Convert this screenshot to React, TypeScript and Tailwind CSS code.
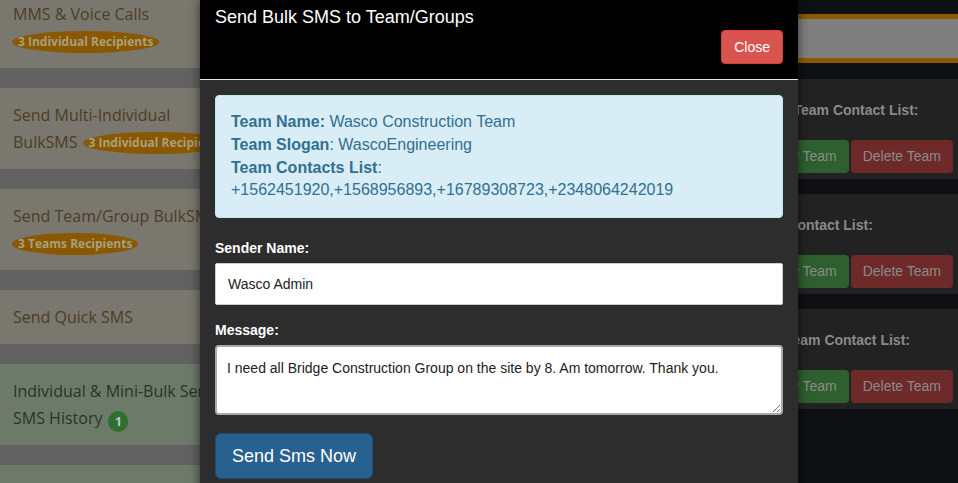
import React from 'react';

const leftCards = [
  { lines: ['MMS & Voice Calls'], badge: '3 Individual Recipients', badgeBreak: true, tone: 'warm' },
  { lines: ['Send Multi-Individual', 'BulkSMS'], badge: '3 Individual Recipients', badgeBreak: false, tone: 'warm' },
  { lines: ['Send Team/Group BulkSMS'], badge: '3 Teams Recipients', badgeBreak: true, tone: 'warm' },
  { lines: ['Send Quick SMS'], badge: '', badgeBreak: false, tone: 'warm' },
  { lines: ['Individual & Mini-Bulk Sent', 'SMS History'], badge: '1', badgeBreak: false, tone: 'green' },
];

const teams = [
  'Wasco Construction Team Contact List:',
  'Wasco Engineering Contact List:',
  'Wasco Electricians Team Contact List:',
];

type Card = (typeof leftCards)[number];

const Badge: React.FC<{ text: string; green: boolean; inline: boolean }> = ({ text, green, inline }) =>
  green ? (
    <span className="ml-[6px] inline-flex h-[21px] w-[20px] items-center justify-center rounded-full bg-[#2e7030] align-[-2px] text-[12px] font-bold text-[#c4c4c4]">
      {text}
    </span>
  ) : (
    <span
      className={`inline-block rounded-[50%] bg-[#8a5800] px-[6px] text-[12px] font-bold leading-[22px] text-[#a8a07e] align-[1px] ${
        inline ? 'ml-[5px]' : 'ml-[-1px]'
      }`}
    >
      {text}
    </span>
  );

const LeftCard: React.FC<{ card: Card }> = ({ card }) => {
  const green = card.tone === 'green';
  return (
    <div
      className={`pb-[13px] pl-[13px] pt-[14px] text-[16px] leading-[27px] whitespace-nowrap ${
        green ? 'bg-[#6d7a6a] text-[#1f3b20]' : 'bg-[#7a776e] text-[#4c3d25]'
      }`}
    >
      {card.lines.map((line, i) => (
        <div key={i}>
          {line}
          {i === card.lines.length - 1 && card.badge && !card.badgeBreak && (
            <Badge text={card.badge} green={green} inline />
          )}
        </div>
      ))}
      {card.badge && card.badgeBreak && (
        <div>
          <Badge text={card.badge} green={green} inline={false} />
        </div>
      )}
    </div>
  );
};

export default function App() {
  return (
    <div className="relative h-[483px] w-[958px] overflow-hidden bg-[#0f1014] font-['Liberation_Sans',Arial,sans-serif]">
      {/* page behind the modal */}
      <div className="flex h-full">
        <div className="mt-[-13px] flex w-[280px] flex-col gap-[20px] bg-[#626262] font-['Comic_Sans_MS','Open_Sans',sans-serif]">
          {leftCards.map((c, i) => (
            <LeftCard key={i} card={c} />
          ))}
          <div className="h-[81px] bg-[#6d7a6a]" />
        </div>
        <div className="flex flex-1 flex-col pt-[14px]">
          <div className="h-[49px] border-y-[5px] border-[#8a5a00] bg-[#7f7f7f]" />
          <div className="mt-[16px] flex flex-col gap-[15px]">
            {teams.map((t) => (
              <div key={t} className="bg-[#222222] pb-[6px] pl-[374px] pr-[5px] pt-[21px]">
                <div className="text-[14px] font-bold leading-[20px] whitespace-nowrap text-[#8a8a8a]">{t}</div>
                <div className="mt-[20px] flex justify-end gap-[2px]">
                  <button className="h-[33px] rounded-[4px] bg-[#2e602f] px-[12px] text-[14px] text-[#8a8a8a]">
                    View Team
                  </button>
                  <button className="h-[33px] rounded-[4px] bg-[#6e2a28] px-[12px] text-[14px] text-[#8a8a8a]">
                    Delete Team
                  </button>
                </div>
              </div>
            ))}
          </div>
        </div>
      </div>

      {/* modal */}
      <div className="absolute left-[200px] top-0 w-[598px] bg-[#2d2d2d] shadow-[0_0_10px_rgba(0,0,0,0.6)]">
        <div className="border-b border-[#e5e5e5] bg-black px-[15px] pb-[15px] pt-[4px]">
          <h4 className="text-[18px] leading-[26px] text-white">Send Bulk SMS to Team/Groups</h4>
          <div className="flex justify-end">
            <button className="h-[34px] rounded-[4px] border border-[#d43f3a] bg-[#d9534f] px-[12px] text-[14px] text-white">
              Close
            </button>
          </div>
        </div>
        <div className="p-[15px] pb-[30px]">
          <div className="rounded-[4px] border border-[#bce8f1] bg-[#d9edf7] p-[15px] text-[16px] leading-[22.75px] text-[#31708f]">
            <div>
              <b>Team Name:</b> Wasco Construction Team
            </div>
            <div>
              <b>Team Slogan</b>: WascoEngineering
            </div>
            <div>
              <b>Team Contacts List</b>:
              <br />
              +1562451920,+1568956893,+16789308723,+2348064242019
            </div>
          </div>

          <label className="mt-[20px] block text-[14px] font-bold leading-[20px] text-white">Sender Name:</label>
          <input
            className="mt-[5px] block h-[42px] w-full rounded-[2px] border border-[#cccccc] bg-white px-[12px] text-[14px] text-[#222] outline-none"
            defaultValue="Wasco Admin"
          />

          <label className="mt-[15px] block text-[14px] font-bold leading-[20px] text-white">Message:</label>
          <textarea
            className="mt-[5px] block h-[70px] w-full rounded-[4px] border-2 border-[#a9a9a9] bg-white px-[10px] pb-[6px] pt-[11px] text-[14px] leading-[20px] text-[#222] outline-none"
            defaultValue="I need all Bridge Construction Group on the site by 8. Am tomorrow. Thank you."
          />

          <button className="mt-[18px] h-[46px] rounded-[6px] border border-[#204d74] bg-[#286090] px-[16px] text-[18px] text-white">
            Send Sms Now
          </button>
        </div>
      </div>
    </div>
  );
}
